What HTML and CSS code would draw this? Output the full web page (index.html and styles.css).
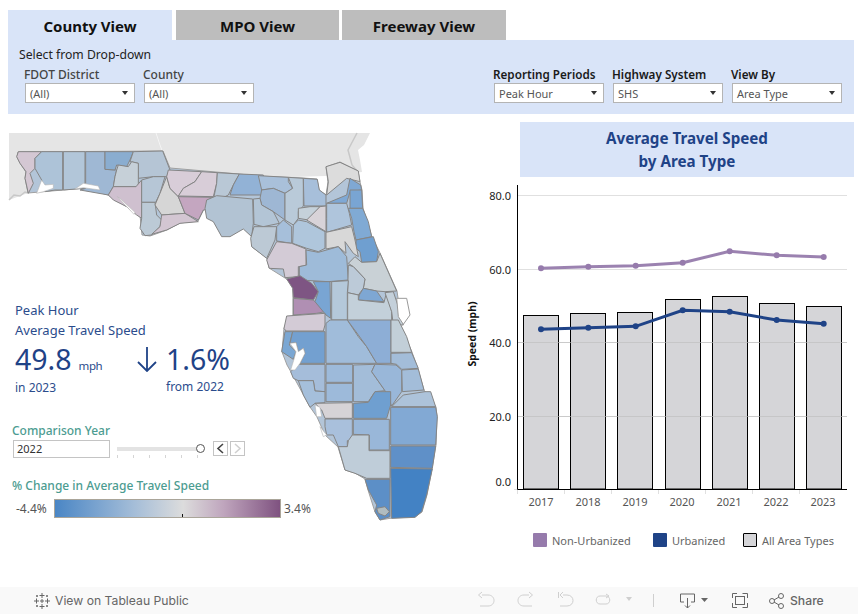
FILE: index.html
```html
<!DOCTYPE html>
<html lang="en">
<head>
<meta charset="utf-8">
<title>Average Travel Speed</title>
<link rel="stylesheet" href="styles.css">
</head>
<body>
<div class="page">
  <nav class="tabs">
    <div class="tab tab-active">County View</div>
    <div class="tab tab-mpo">MPO View</div>
    <div class="tab tab-fwy">Freeway View</div>
  </nav>
  <section class="filters">
    <div class="filters-head">Select from Drop-down</div>
    <div class="filters-row">
      <div class="filter"><div class="flabel">FDOT District</div><div class="dd"><span>(All)</span><i class="caret"></i></div></div>
      <div class="filter"><div class="flabel">County</div><div class="dd"><span>(All)</span><i class="caret"></i></div></div>
      <div class="filter filter-push"><div class="flabel flabel-dark">Reporting Periods</div><div class="dd"><span>Peak Hour</span><i class="caret"></i></div></div>
      <div class="filter"><div class="flabel flabel-dark">Highway System</div><div class="dd"><span>SHS</span><i class="caret"></i></div></div>
      <div class="filter"><div class="flabel flabel-dark">View By</div><div class="dd"><span>Area Type</span><i class="caret"></i></div></div>
    </div>
  </section>
  <main class="main">
    <section class="left">
      <svg class="map" viewBox="0 114 462 473" width="462" height="473">
        <polygon class="land" points="9,133 370,133 364,145 358,150 360,160 362,172 325,176 260,178 170,172 163,155 40,155 30,175 28,193 9,200"/>
        <polyline class="border" points="156,133 160,145 163,153"/>
        <polyline class="coastline" points="9,200 14,195 20,196 25,192 28,193"/>
        <polyline class="coastline" points="357,133 348,150 352,165 358,172"/>
        <polygon class="state" points="18,152 163,151 170,168 239,174 258,176 303,178 317,179 319,190 326,195 328,182 326,167 340,162 358,171 360,182 362,190 363,208 372,237 380,253 397,291 400,312 398,320 412,352 418,369 424,390 436,407 437,417 436,445 432,469 427,495 422,512 415,517 392,518 380,520 375,512 368,490 365,479 355,473 345,470 338,447 325,435 317,417 310,407 291,372 287,365 282,352 284,328 293,315 293,288 287,279 285,278 269,268 267,258 252,247 255,237 237,222 218,209 213,209 204,209 198,221 180,223 167,230 150,236 142,235 140,215 108,195 85,188 63,190 28,193 25,178 26,172 20,163 17,157"/>
        <g class="counties" transform="translate(0,125) scale(.33333)">
          <polygon fill="#d4c7d3" points="55,80 125,80 105,100 105,130 90,145 100,175 85,205 75,160 78,140 60,115 50,95"/>
          <polygon fill="#adc3d8" points="125,80 188,80 188,195 165,195 135,200 125,165 105,130 105,100"/>
          <polygon fill="#b2c6d9" points="190,80 255,80 255,190 190,195"/>
          <polygon fill="#9fb8d4" points="257,80 315,80 315,133 350,135 345,155 340,185 325,210 240,195 257,190"/>
          <polygon fill="#8aadd0" points="315,80 400,80 390,105 380,125 350,120 345,135 315,133"/>
          <polygon fill="#b5c5d5" points="400,80 488,78 510,135 500,155 460,155 415,160 415,115 390,110"/>
          <polygon fill="#c6d0d8" points="350,135 355,120 385,125 395,110 415,115 415,185 340,185 345,155"/>
          <polygon fill="#cfc0cf" points="325,210 340,185 408,185 425,165 425,280 410,270 380,245 340,225"/>
          <polygon fill="#b6c6d6" points="425,165 460,155 495,155 480,205 467,232 425,232"/>
          <polygon fill="#bccad6" points="425,232 465,232 470,270 485,285 480,305 455,330 435,332 420,310 425,280"/>
          <polygon fill="#d6d6d6" points="500,155 510,190 535,215 555,265 485,270 465,240 480,205"/>
          <polygon fill="#d3c6d2" points="485,270 555,265 595,290 540,295 500,315 455,328 480,305"/>
          <polygon fill="#d8cdd8" points="505,135 605,140 585,170 550,190 535,215 510,190 500,155"/>
          <polygon fill="#d8cdd8" points="605,140 652,143 650,175 640,215 535,213 550,190 585,170"/>
          <polygon fill="#c4a6c0" points="535,215 640,217 640,252 610,255 595,285 555,265"/>
          <polygon fill="#b9c8d6" points="652,143 718,147 700,180 685,210 655,225 640,250 642,215 650,175"/>
          <polygon fill="#92b2d6" points="718,147 790,150 795,210 690,210 700,180"/>
          <polygon class="bay" points="110,205 125,165 135,180 160,178 160,190 130,200"/>
          <polygon class="bay" points="225,192 250,175 295,183 300,195 250,188"/>
          <polygon class="bay" points="352,215 362,222 405,262 402,268"/>
        </g>
        <g class="counties" transform="translate(230,125) scale(.33333)">
          <polygon fill="#b2c3d3" points="-75,250 -70,225 -40,212 68,222 70,295 65,335 40,312 0,335 -25,335 -50,290 -70,280"/>
          <polygon fill="#a9c0da" points="85,152 175,157 175,170 188,190 165,205 130,190 95,195"/>
          <polygon fill="#9eb7d4" points="95,195 130,190 165,205 165,285 130,260 95,240 90,220"/>
          <polygon fill="#b9cad9" points="175,157 220,160 220,243 205,260 205,280 190,300 165,285 165,205 188,190"/>
          <polygon fill="#a7bfda" points="220,160 262,163 268,195 288,210 288,243 222,243"/>
          <polygon fill="#dcdcdc" points="288,125 330,112 385,138 390,170 350,160 290,210 295,170"/>
          <polygon fill="#7fa8d4" points="290,235 350,210 360,160 392,180 395,195 360,200 350,235"/>
          <polygon fill="#79a5d3" points="360,195 395,195 398,250 360,250"/>
          <polygon fill="#80aad4" points="355,250 398,250 415,290 425,335 378,345 372,320 365,280"/>
          <polygon fill="#6f9fd0" points="378,345 430,335 445,380 440,410 395,412 390,380 378,370"/>
          <polygon fill="#afc5dc" points="290,235 350,235 358,265 365,300 290,322 290,280"/>
          <polygon fill="#c5d1da" points="205,250 240,245 270,245 235,285 205,280"/>
          <polygon fill="#d8d3d8" points="270,245 288,243 288,320 230,285"/>
          <polygon fill="#b3c5d6" points="70,222 90,220 95,240 130,260 148,295 100,305 72,298"/>
          <polygon fill="#bcc9d5" points="72,305 140,305 135,345 110,400 65,365 62,340"/>
          <polygon fill="#a6bfda" points="140,305 160,285 185,305 185,355 140,348"/>
          <polygon fill="#afc6dc" points="190,300 205,285 230,290 285,320 285,370 265,380 230,370 188,355"/>
          <polygon fill="#d8d8d8" points="288,322 365,305 375,345 385,395 370,385 345,350 348,385 325,365 288,372"/>
          <polygon fill="#d3cbd6" points="140,350 185,355 228,372 228,422 205,425 205,455 165,458 160,432 118,430 110,405"/>
          <polygon fill="#9ebbd9" points="228,375 265,382 325,365 350,395 355,465 295,470 208,465 208,425 230,420"/>
          <polygon fill="#c9d1d6" points="375,395 395,412 440,410 450,385 500,498 465,500 440,498 400,490 405,462 370,425 355,415"/>
          <polygon fill="#bccad8" points="355,420 370,425 405,462 400,490 385,510 353,503"/>
          <polygon fill="#b4c8da" points="305,470 355,467 352,503 352,585 305,585"/>
          <polygon fill="#7ea7d3" points="388,510 400,490 440,498 462,530 385,525"/>
          <polygon fill="#c3d0da" points="353,503 385,510 385,525 462,533 470,500 485,560 485,588 353,588"/>
          <polygon fill="#c4d0da" points="465,503 490,500 510,560 520,600 490,600 485,560"/>
          <polygon class="lagoon" points="500,520 530,520 540,570 520,598 505,575"/>
          <polygon fill="#7e5583" points="170,462 210,452 245,475 265,500 250,525 190,518 188,490"/>
          <polygon fill="#b08fb3" points="190,520 250,525 285,560 260,565 190,570"/>
          <polygon fill="#79a5d3" points="250,470 300,470 302,580 288,570 255,530 265,500"/>
        </g>
        <g class="counties" transform="translate(270,320) scale(.33333)">
          <polygon fill="#d3cbd6" points="50,-12 165,-20 165,15 160,33 48,33 42,25"/>
          <polygon fill="#7ba7d3" points="45,35 68,35 58,75 78,95 70,118 35,95"/>
          <polygon fill="#73a0d0" points="68,35 165,35 165,130 90,130 105,100 100,85 85,95 78,68 60,70"/>
          <polygon fill="#a0bcda" points="168,10 180,0 232,0 265,50 290,80 320,130 168,130"/>
          <polygon fill="#8daed6" points="232,0 363,0 363,130 320,130 290,80 265,45"/>
          <polygon fill="#c2cfd8" points="363,0 385,0 410,50 425,97 363,97"/>
          <polygon fill="#a3bdd9" points="363,100 425,98 445,145 395,148 380,133 363,130"/>
          <polygon fill="#a3bdd9" points="395,150 445,147 462,210 397,215"/>
          <polygon fill="#a3bdd9" points="250,135 315,133 305,155 345,212 315,215 295,245 250,245"/>
          <polygon fill="#99b7d9" points="315,133 378,135 395,150 395,215 365,258 345,212 305,155"/>
          <polygon fill="#9dbada" points="168,133 248,133 248,187 168,187"/>
          <polygon fill="#9dbada" points="168,190 248,190 248,245 168,245"/>
          <polygon fill="#a5bdda" points="62,155 85,133 165,133 165,215 135,213 130,182 85,182 70,175"/>
          <polygon fill="#a5bfdb" points="85,182 130,182 135,213 165,215 165,248 135,250 120,262 100,225"/>
          <polygon fill="#d6d3d6" points="135,250 247,248 247,295 165,295 155,270"/>
          <polygon fill="#6f9fd0" points="250,250 295,247 315,215 362,215 362,255 350,295 250,295"/>
          <polygon fill="#99b7d9" points="250,298 358,298 358,390 298,390 298,345 250,343"/>
          <polygon fill="#a9c0dc" points="165,297 247,297 247,362 232,362 232,380 205,380 190,345 170,345 165,320"/>
          <polygon fill="#bfcdd9" points="205,380 232,380 235,362 247,345 297,345 297,392 360,392 360,475 290,475 255,460 225,450"/>
          <polygon fill="#adc3da" points="365,260 400,225 465,215 482,215 497,260"/>
          <polygon fill="#82a9d4" points="362,262 497,262 502,290 497,375 362,375"/>
          <polygon fill="#5f90c8" points="362,378 497,378 487,445 362,442"/>
          <polygon fill="#4382c4" points="362,445 487,447 470,525 455,575 435,592 365,595"/>
          <polygon fill="#5c8fc7" points="285,478 360,478 360,590 330,600 315,575 320,555 295,510"/>
          <polygon fill="#b0bcc0" points="320,565 345,560 358,575 345,588 325,580"/>
          <polygon class="bay" points="60,70 78,68 85,95 100,85 105,100 90,130 75,150 62,150 72,118 78,95"/>
          <polygon class="bay" points="135,255 150,262 155,290 140,290"/>
          <polygon class="bay" points="150,320 170,345 160,350"/>
        </g>
      </svg>
      <div class="overlay">
        <div class="kpi-title">Peak Hour<br>Average Travel Speed</div>
        <div class="kpi-row">
          <div class="kpi-a">
            <div class="kpi-num">49.8<span class="kpi-unit">mph</span></div>
            <div class="kpi-sub">in 2023</div>
          </div>
          <div class="kpi-b">
            <svg class="arrow" width="20" height="25" viewBox="0 0 20 25"><path d="M10 0V24M1 15L10 24L19 15" /></svg>
            <div>
              <div class="kpi-num">1.6%</div>
              <div class="kpi-sub kpi-sub-b">from 2022</div>
            </div>
          </div>
        </div>
        <div class="teal teal-year">Comparison Year</div>
        <div class="year-row">
          <div class="year-input">2022</div>
          <div class="slider"><i class="knob"></i><div class="ticks"><b></b><b></b><b></b><b></b><b></b><b></b></div></div>
          <div class="step"><svg width="9" height="11" viewBox="0 0 9 11"><path class="chev" d="M7 1L2 5.5L7 10"/></svg></div>
          <div class="step step-off"><svg width="9" height="11" viewBox="0 0 9 11"><path class="chev chev-off" d="M2 1L7 5.5L2 10"/></svg></div>
        </div>
        <div class="teal teal-change">% Change in Average Travel Speed</div>
        <div class="scale-row">
          <span class="scale-l">-4.4%</span>
          <div class="scale-bar"><i class="scale-tick"></i></div>
          <span class="scale-r">3.4%</span>
        </div>
      </div>
    </section>
    <section class="right">
      <h2 class="chart-title">Average Travel Speed<br>by Area Type</h2>
      <svg class="chart" viewBox="462 177 396 350" width="396" height="350">
        <g class="grid">
          <line x1="517" x2="847" y1="195.5" y2="195.5"/>
          <line x1="517" x2="847" y1="269.5" y2="269.5"/>
          <line x1="517" x2="847" y1="342.5" y2="342.5"/>
          <line x1="517" x2="847" y1="416.5" y2="416.5"/>
        </g>
        <g class="bars">
          <rect x="523.5" y="315.5" width="35" height="173.5"/>
          <rect x="570.5" y="313.5" width="35" height="175.5"/>
          <rect x="617.5" y="312.5" width="35" height="176.5"/>
          <rect x="665.5" y="299.5" width="35" height="189.5"/>
          <rect x="712.5" y="296.5" width="35" height="192.5"/>
          <rect x="759.5" y="303.5" width="35" height="185.5"/>
          <rect x="806.5" y="306.5" width="35" height="182.5"/>
        </g>
        <g class="grid-over">
          <line x1="517" x2="847" y1="342.5" y2="342.5"/>
          <line x1="517" x2="847" y1="416.5" y2="416.5"/>
        </g>
        <path class="axis" d="M517.5 185V489.5H847"/>
        <path class="ticks-x" d="M517.5 490V494M564.5 490V494M611.5 490V494M658.5 490V494M705.5 490V494M752.5 490V494M799.5 490V494M514 489.5H517"/>
        <polyline class="line-p" points="541,268.3 588.3,266.7 635.7,265.7 682.7,262.7 729.7,251.3 776.7,255.3 823.7,257"/>
        <g class="dots-p">
          <circle cx="541" cy="268.3" r="3"/><circle cx="588.3" cy="266.7" r="3"/><circle cx="635.7" cy="265.7" r="3"/><circle cx="682.7" cy="262.7" r="3"/><circle cx="729.7" cy="251.3" r="3"/><circle cx="776.7" cy="255.3" r="3"/><circle cx="823.7" cy="257" r="3"/>
        </g>
        <polyline class="line-b" points="541,329.3 588.3,327.7 635.7,326.3 682.7,310.3 729.7,311.7 776.7,320 823.7,323.7"/>
        <g class="dots-b">
          <circle cx="541" cy="329.3" r="3"/><circle cx="588.3" cy="327.7" r="3"/><circle cx="635.7" cy="326.3" r="3"/><circle cx="682.7" cy="310.3" r="3"/><circle cx="729.7" cy="311.7" r="3"/><circle cx="776.7" cy="320" r="3"/><circle cx="823.7" cy="323.7" r="3"/>
        </g>
        <g class="ylab">
          <text x="511" y="200">80.0</text>
          <text x="511" y="274">60.0</text>
          <text x="511" y="347">40.0</text>
          <text x="511" y="421">20.0</text>
          <text x="511" y="486">0.0</text>
        </g>
        <g class="xlab">
          <text x="541" y="506">2017</text>
          <text x="588" y="506">2018</text>
          <text x="635" y="506">2019</text>
          <text x="682" y="506">2020</text>
          <text x="729" y="506">2021</text>
          <text x="776" y="506">2022</text>
          <text x="823" y="506">2023</text>
        </g>
        <text class="ytitle" transform="translate(475.500,334) rotate(-90)">Speed (mph)</text>
      </svg>
      <div class="legend">
        <div class="leg leg-1"><i class="sw sw-p"></i>Non-Urbanized</div>
        <div class="leg leg-2"><i class="sw sw-b"></i>Urbanized</div>
        <div class="leg"><i class="sw sw-g"></i>All Area Types</div>
      </div>
    </section>
  </main>
  <footer class="toolbar">
    <svg class="logo" width="18" height="18" viewBox="0 0 18 18">
      <path d="M9 1V6M6.500 3.500H11.500M9 12V17M6.500 14.500H11.500M1 9H6M3.500 6.500V11.500M12 9H17M14.500 6.500V11.500M9 7V11M7 9H11M4 3V5M3 4H5M14 3V5M13 4H15M4 13V15M3 14H5M14 13V15M13 14H15"/>
    </svg>
    <span class="viewon">View on Tableau Public</span>
    <svg class="tools" width="312" height="27" viewBox="478 587 312 27">
      <g class="ico-off">
        <path d="M482 595H488C496 595 496 606 488 606H480M482 592L478.500 595L482 598"/>
        <path d="M529 595H524C516 595 516 606 524 606H532M529 592L532.500 595L529 598"/>
        <path d="M563 595H567C575 595 575 606 567 606H560M563 592L560 595L563 598M558.500 592V598"/>
        <path d="M600 596H606C611 596 611 604 606 604H600C595 604 595 596 600 596ZM606 594L609 596L606 598"/>
        <path class="fill" d="M626 597H632L629 601Z"/>
        <path d="M653.500 594V607"/>
      </g>
      <g class="ico-on">
        <path d="M684 602H680.500V594H694.500V602H691M687.500 598V608M685 605.500L687.500 608L690 605.500"/>
        <path class="fill" d="M701 598H708L704.500 602Z"/>
        <path d="M732.500 598V593.500H737M742.500 593.500H747.500V598M747.500 603V607.500H742.500M737 607.500H732.500V603"/>
        <rect x="735.500" y="596.500" width="9" height="8"/>
        <circle cx="772" cy="601" r="2.500"/><circle cx="781" cy="596" r="2.500"/><circle cx="781" cy="606" r="2.500"/>
        <path d="M774 600L779 597M774 602L779 605"/>
      </g>
    </svg>
    <span class="share">Share</span>
  </footer>
</div>
</body>
</html>
```

FILE: styles.css
```css
* { box-sizing: border-box; }
html, body { margin: 0; padding: 0; background: #fff; }
.page { width: 858px; height: 614px; overflow: hidden; display: flex; flex-direction: column; font-family: "Noto Sans", sans-serif; }

.tabs { display: flex; padding: 10px 0 0 8px; height: 40px; flex: none; }
.tab { height: 30px; width: 163px; background: #bdbdbd; color: #111; font-weight: 700; font-size: 15px; line-height: 33px; text-align: center; margin-right: 3px; }
.tab-active { width: 164px; background: #d9e4f8; margin-right: 4px; }
.tab-fwy { width: 164px; }

.filters { flex: none; height: 74px; margin: 0 4px 0 8px; background: #d9e4f8; padding: 6px 12px 0 11px; }
.filters-head { font-size: 12.200px; line-height: 17px; color: #222; }
.filters-row { display: flex; padding-left: 6px; margin-top: 3px; }
.filter { width: 110px; margin-right: 9px; }
.filter:last-child { margin-right: 0; }
.filter-push { margin-left: auto; }
.flabel { font-size: 12px; line-height: 17px; font-weight: 500; color: #444; white-space: nowrap; margin-left: -1px; }
.flabel-dark { color: #1a1a1a; font-weight: 600; font-size: 11.700px; }
.dd { height: 20px; margin-top: 0; background: #fff; border: 1px solid #b4b4b4; display: flex; align-items: center; justify-content: space-between; padding: 0 6px 0 4px; font-size: 11px; color: #555; }
.caret { width: 0; height: 0; border-left: 3.500px solid transparent; border-right: 3.500px solid transparent; border-top: 4px solid #333; }

.main { flex: 1; display: flex; min-height: 0; }
.left { width: 462px; position: relative; flex: none; }
.map { position: absolute; left: 0; top: 0; }
.land { fill: #e5e5e5; }
.border { fill: none; stroke: #f4f4f4; stroke-width: 1; }
.coastline { fill: none; stroke: #c8c8c8; stroke-width: 1.500; }
.state { fill: #b3c5d8; stroke: #a0a0a0; stroke-width: 1; stroke-linejoin: round; }
.counties polygon { stroke: #858585; stroke-width: 1; vector-effect: non-scaling-stroke; stroke-linejoin: round; }
.counties .bay { fill: #fff; stroke: #b5b5b5; stroke-width: .6; }
.counties .lagoon { fill: #fff; stroke: #9a9a9a; }

.overlay { position: relative; padding: 187px 0 0 12px; }
.kpi-title { padding-left: 3px; font-size: 13px; line-height: 19.500px; color: #2b4c8c; }
.kpi-row { display: flex; padding-left: 3px; margin-top: 1px; }
.kpi-a { width: 122px; }
.kpi-b { display: flex; }
.kpi-num { font-size: 28.500px; height: 36px; line-height: 36px; color: #1f4387; white-space: nowrap; }
.kpi-unit { font-size: 11.500px; letter-spacing: -.4px; margin-left: 7px; color: #2b4c8c; }
.kpi-sub { font-size: 12px; line-height: 20px; margin-top: 1px; color: #2b4c8c; }
.kpi-sub-b { margin-top: 0; }
.arrow { margin: 6px 9px 0 0; flex: none; }
.arrow path { fill: none; stroke: #1f4387; stroke-width: 1.800; }
.teal { color: #4c9c91; font-size: 12px; line-height: 17px; font-weight: 500; white-space: nowrap; }
.teal-year { margin-top: 24px; }
.year-row { display: flex; align-items: flex-start; height: 18px; margin-top: 1px; padding-left: 1px; }
.year-input { width: 97px; height: 18px; border: 1px solid #c4c4c4; font-size: 11px; line-height: 16px; padding-left: 3px; color: #333; }
.slider { position: relative; width: 84px; height: 16px; margin-left: 7px; }
.slider::before { content: ""; display: block; margin-top: 7px; height: 4px; background: #e3e3e3; }
.knob { position: absolute; right: -4px; top: 4px; width: 9px; height: 9px; border-radius: 50%; background: #fff; border: 1px solid #555; }
.ticks { display: flex; justify-content: space-between; margin-top: 4px; padding-right: 3px; }
.ticks b { display: block; width: 1px; height: 3px; background: #d5d5d5; }
.step { width: 15px; height: 15px; margin: 1px 0 0 2px; border: 1px solid #c4c4c4; display: flex; align-items: center; justify-content: center; }
.slider + .step { margin-left: 12px; }
.chev { fill: none; stroke: #444; stroke-width: 1.600; }
.chev-off { stroke: #d0d0d0; }
.teal-change { margin-top: 19px; }
.scale-row { display: flex; align-items: center; margin-top: 5px; padding-left: 4px; font-size: 12px; color: #555; height: 19px; }
.scale-l { width: 38px; }
.scale-r { margin-left: 3px; }
.scale-bar { position: relative; width: 227px; height: 19px; border: 1px solid #aaa599; background: linear-gradient(90deg, #4a86c5 0%, #a4bdd8 35%, #dcdcdc 57%, #bfa5bd 75%, #7f5280 100%); }
.scale-tick { position: absolute; left: 127px; bottom: 0; width: 1px; height: 3px; background: #111; }

.right { flex: 1; padding-top: 8px; }
.chart-title { margin: 0 4px 0 58px; height: 55px; background: #d9e4f8; color: #1f4387; font-size: 15.200px; line-height: 23px; font-weight: 700; text-align: center; padding-top: 5px; }
.chart { display: block; }
.grid line { stroke: #e0e0e0; stroke-width: 1; }
.grid-over line { stroke: #bdbdbd; stroke-width: 1; opacity: .6; }
.bars rect { fill: #d5d5d8; stroke: #000; stroke-width: 1; }
.axis { fill: none; stroke: #000; stroke-width: 1; }
.ticks-x { fill: none; stroke: #e0e0e0; stroke-width: 1; }
.line-p { fill: none; stroke: #967bac; stroke-width: 3; opacity: .95; }
.dots-p circle { fill: #967bac; }
.line-b { fill: none; stroke: #1f4387; stroke-width: 3; }
.dots-b circle { fill: #1f4387; }
.ylab text { font-size: 11px; fill: #222; text-anchor: end; }
.xlab text { font-size: 11px; fill: #555; text-anchor: middle; }
.ytitle { font-size: 10.500px; font-weight: 700; fill: #111; text-anchor: middle; }
.legend { display: flex; padding-left: 71px; margin-top: 6px; font-size: 11px; color: #666; }
.leg { display: flex; align-items: center; height: 14px; white-space: nowrap; }
.leg-1 { width: 120px; }
.leg-2 { width: 90px; }
.sw { width: 14px; height: 14px; margin-right: 5px; flex: none; border-radius: 1px; }
.sw-p { background: #967bac; }
.sw-b { background: #1f4387; }
.sw-g { background: #d5d5d8; border: 1px solid #000; }

.toolbar { flex: none; height: 27px; background: #f9f9f9; display: flex; align-items: center; padding-left: 33px; font-family: "Inter", sans-serif; font-size: 12.200px; color: #666; }
.logo { flex: none; }
.logo path { fill: none; stroke: #666; stroke-width: 1; }
.viewon { margin-left: 4px; width: 423px; }
.tools { flex: none; }
.ico-off path { fill: none; stroke: #cfcfcf; stroke-width: 1; }
.ico-off .fill { fill: #cfcfcf; stroke: none; }
.ico-on path, .ico-on rect, .ico-on circle { fill: none; stroke: #666; stroke-width: 1; }
.ico-on .fill { fill: #666; stroke: none; }
.share { font-weight: 500; }
```
